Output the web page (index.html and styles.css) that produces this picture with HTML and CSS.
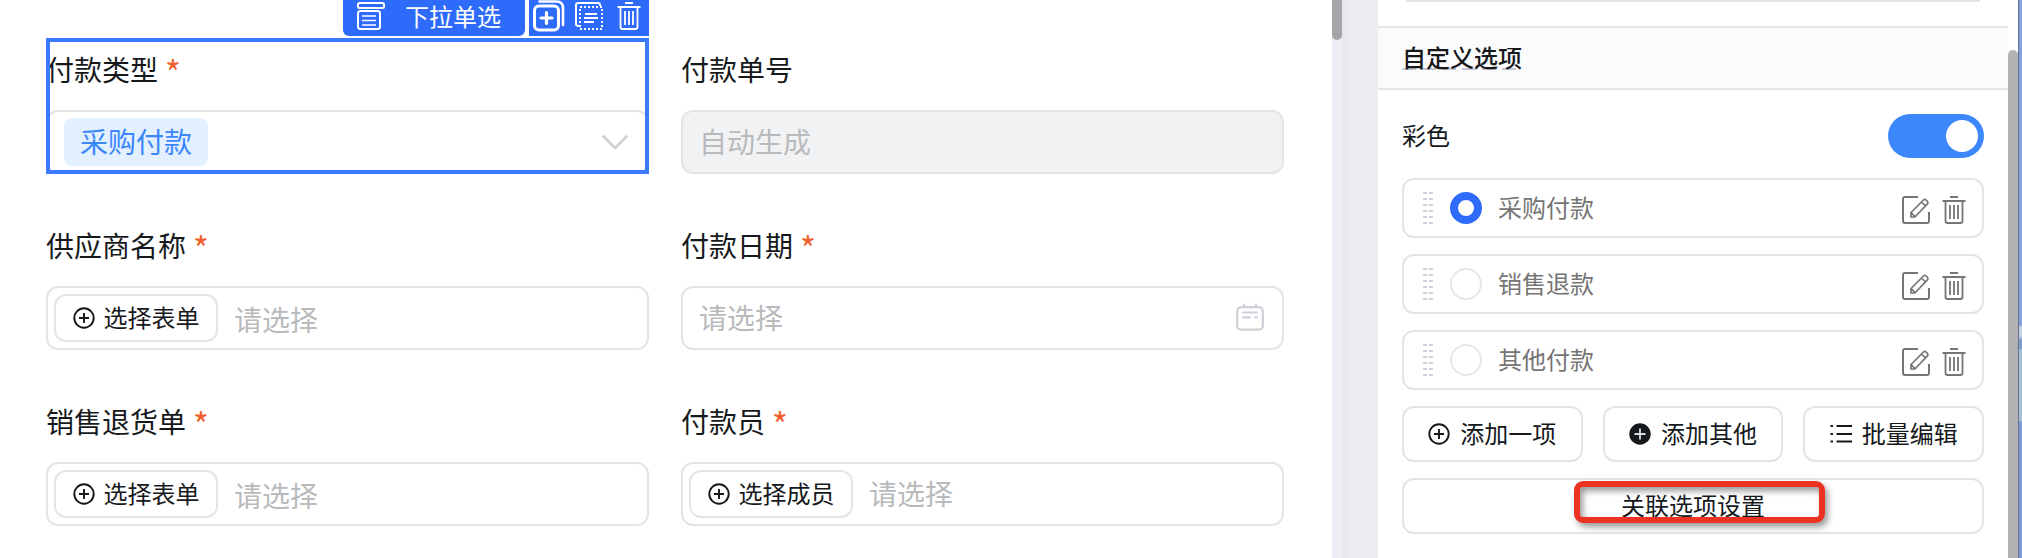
FILE: index.html
```
<!DOCTYPE html>
<html lang="zh-CN">
<head>
    <meta charset="UTF-8">
    <title>表单设计</title>
    <link rel="stylesheet" href="styles.css">
</head>
<body>
    <!-- shared icons -->
    <svg class="sprite">
        <symbol id="plus-circle" viewBox="0 0 22 22">
            <circle cx="11" cy="11" r="9.7" fill="none" stroke="currentColor" stroke-width="1.9"/>
            <path d="M11 6v10M6 11h10" stroke="currentColor" stroke-width="1.9"/>
        </symbol>
        <symbol id="trash" viewBox="0 0 24 28">
            <path d="M8 1h8M0.5 5h23M3.5 5v20q0 2 2 2h13q2 0 2-2V5M8 9v14M12 9v14M16 9v14" fill="none" stroke="currentColor" stroke-width="1.8"/>
        </symbol>
        <symbol id="edit" viewBox="0 0 28 28">
            <path d="M16 1H3Q1 1 1 3v22q0 2 2 2h22q2 0 2-2v-9" fill="none" stroke="currentColor" stroke-width="2"/>
            <path d="M9 21v-4.500L21.500 4q1.300-1.200 2.600 0l1.300 1.300q1.200 1.300 0 2.600L13 21zM9 16.500l4.300 4.300M19.500 6l4 4" fill="none" stroke="currentColor" stroke-width="1.700"/>
        </symbol>
    </svg>

    <div class="page">
        <main class="form">
            <div class="field selected">
                <div class="toolbar">
                    <div class="toolbar-name">
                        <svg width="28" height="28" viewBox="0 0 28 28" fill="none" stroke="currentColor" stroke-width="2">
                            <rect x="1" y="1" width="26" height="5" rx="1.5"/>
                            <rect x="1" y="9" width="22" height="18" rx="2.5"/>
                            <path d="M5 14h14M5 18.500h14M5 23h14" stroke-width="1.700"/>
                        </svg>
                        <span>下拉单选</span>
                    </div>
                    <div class="toolbar-actions">
                        <svg width="32" height="32" viewBox="0 0 32 32" fill="none" stroke="currentColor" stroke-linecap="round">
                            <rect x="1.500" y="6" width="24" height="24" rx="4.500" stroke-width="3"/>
                            <path d="M13.500 12.500v11M8 18h11" stroke-width="3.200"/>
                            <path d="M6.500 1.500h17q6.500 0 6.500 6.500v17" stroke-width="2.600"/>
                        </svg>
                        <svg class="icon-template" width="28" height="28" viewBox="0 0 28 28" fill="none" stroke="currentColor">
                            <path d="M25 4V3q0-2-2-2H3Q1 1 1 3v19q0 2 3 2" stroke-width="2"/>
                            <rect x="5" y="5" width="22" height="22" stroke-width="2" stroke-dasharray="2 2"/>
                            <path d="M10 12h12M9 16h14M9 20h10" stroke-width="1.800"/>
                        </svg>
                        <svg class="icon-delete" width="24" height="28"><use href="#trash"/></svg>
                    </div>
                </div>
                <label class="label">付款类型<i>*</i></label>
                <div class="input select">
                    <span class="tag">采购付款</span>
                    <svg width="26" height="15" viewBox="0 0 26 15" fill="none" stroke="#cfd0d4" stroke-width="2.8" stroke-linecap="round" stroke-linejoin="round">
                        <path d="M1.500 1.500L13 13L24.500 1.500"/>
                    </svg>
                </div>
            </div>
            <div class="field">
                <label class="label">付款单号</label>
                <div class="input disabled">自动生成</div>
            </div>
            <div class="field">
                <label class="label">供应商名称<i>*</i></label>
                <div class="input picker">
                    <button class="pick-btn"><svg width="22" height="22"><use href="#plus-circle"/></svg><span>选择表单</span></button>
                    <span class="hint low">请选择</span>
                </div>
            </div>
            <div class="field">
                <label class="label">付款日期<i>*</i></label>
                <div class="input date">
                    <span>请选择</span>
                    <svg width="28" height="28" viewBox="0 0 28 28" fill="none" stroke="#cfd0d7" stroke-width="2.200" stroke-linecap="round">
                        <rect x="1.200" y="4.200" width="25.600" height="22.500" rx="4"/>
                        <path d="M8 1.500v2M20 1.500v2M7 9.500h14M7 14.300h7M19 14.300h2"/>
                    </svg>
                </div>
            </div>
            <div class="field">
                <label class="label">销售退货单<i>*</i></label>
                <div class="input picker">
                    <button class="pick-btn"><svg width="22" height="22"><use href="#plus-circle"/></svg><span>选择表单</span></button>
                    <span class="hint low">请选择</span>
                </div>
            </div>
            <div class="field">
                <label class="label">付款员<i>*</i></label>
                <div class="input picker">
                    <button class="pick-btn"><svg width="22" height="22"><use href="#plus-circle"/></svg><span>选择成员</span></button>
                    <span class="hint">请选择</span>
                </div>
            </div>
        </main>
        <div class="form-scroll"><div class="form-thumb"></div></div>
        <div class="gutter"></div>

        <aside class="settings">
            <div class="prev-card"></div>
            <div class="section-title"><span>自定义选项</span></div>
            <div class="settings-body">
                <div class="color-row">
                    <span>彩色</span>
                    <div class="switch"><div class="knob"></div></div>
                </div>
                <div class="option">
                    <div class="drag"></div>
                    <div class="radio checked"></div>
                    <span class="option-name">采购付款</span>
                    <svg width="28" height="28"><use href="#edit"/></svg>
                    <svg width="24" height="28"><use href="#trash"/></svg>
                </div>
                <div class="option">
                    <div class="drag"></div>
                    <div class="radio"></div>
                    <span class="option-name">销售退款</span>
                    <svg width="28" height="28"><use href="#edit"/></svg>
                    <svg width="24" height="28"><use href="#trash"/></svg>
                </div>
                <div class="option">
                    <div class="drag"></div>
                    <div class="radio"></div>
                    <span class="option-name">其他付款</span>
                    <svg width="28" height="28"><use href="#edit"/></svg>
                    <svg width="24" height="28"><use href="#trash"/></svg>
                </div>
                <div class="btn-row">
                    <button class="btn"><svg width="22" height="22"><use href="#plus-circle"/></svg><span>添加一项</span></button>
                    <button class="btn">
                        <svg width="22" height="22" viewBox="0 0 22 22">
                            <circle cx="11" cy="11" r="10.700" fill="#16191c"/>
                            <path d="M11 5.500v11M5.500 11h11" stroke="#ddd" stroke-width="1.800"/>
                        </svg>
                        <span>添加其他</span>
                    </button>
                    <button class="btn">
                        <svg width="22" height="22" viewBox="0 0 22 22" stroke="currentColor" stroke-width="2">
                            <path d="M6.500 3H22M6.500 11H22M6.500 18.500H22M0.500 3h2.500M0.500 11h2.500M0.500 18.500h2.500"/>
                        </svg>
                        <span>批量编辑</span>
                    </button>
                </div>
                <button class="btn link-btn"><span>关联选项设置</span><b class="marker"></b></button>
            </div>
        </aside>
        <div class="side-scroll"><div class="side-thumb"></div></div>
        <div class="edge"></div>
    </div>
</body>
</html>
```

FILE: styles.css
```
* {
    box-sizing: border-box;
}

body {
    margin: 0;
    overflow: hidden;
    background: #fff;
    color: #16191c;
    font-family: "Noto Sans CJK SC", sans-serif;
}

svg {
    display: block;
    flex-shrink: 0;
}

button {
    font-family: inherit;
    color: #16191c;
    background: #fff;
    padding: 0;
}

.sprite {
    position: absolute;
    width: 0;
    height: 0;
}

.page {
    display: flex;
    height: 558px;
    overflow: hidden;
}

/* form canvas */
.form {
    width: 1332px;
    padding: 38px 48px 0 46px;
    display: grid;
    grid-template-columns: 603px 603px;
    grid-auto-rows: 136px;
    gap: 40px 32px;
}

.field {
    position: relative;
    display: flex;
    flex-direction: column;
    justify-content: space-between;
}

.selected::after {
    content: "";
    position: absolute;
    inset: 0;
    border: 4px solid #3a7afb;
}

.label {
    display: flex;
    padding-top: 11px;
    font-size: 28px;
    line-height: 40px;
}

.label i {
    padding-top: 3px;
    margin-left: 7px;
    font-size: 34px;
    font-style: normal;
    line-height: 40px;
    height: 40px;
    color: #f25f2f;
}

.input {
    height: 64px;
    border: 2px solid #e4e4e5;
    border-radius: 12px;
    display: flex;
    align-items: center;
    font-size: 28px;
    line-height: 40px;
    color: #b9babb;
}

.select {
    justify-content: space-between;
    padding: 0 19px 0 16px;
}

.tag {
    width: 144px;
    height: 48px;
    border-radius: 8px;
    background: #e2f0ff;
    color: #3b87fb;
    text-align: center;
    line-height: 47px;
}

.disabled {
    padding: 0 0 2px 16px;
    background: #f1f2f4;
    border-color: #e2e4e7;
}

.date {
    justify-content: space-between;
    padding: 0 18px 0 16px;
}

.date span {
    padding-bottom: 2px;
}

.date svg {
    margin-top: -2px;
}

.picker {
    padding-left: 6px;
}

.pick-btn {
    width: 164px;
    height: 48px;
    border: 2px solid #e4e4e5;
    border-radius: 12px;
    display: flex;
    align-items: center;
    justify-content: center;
    gap: 9px;
    font-size: 24px;
    line-height: 36px;
}

.pick-btn span,
.btn span {
    padding-bottom: 2px;
}

.hint {
    margin-left: 16px;
    padding-bottom: 2px;
}

.low {
    padding: 2px 0 0;
}

/* toolbar over the selected field */
.toolbar {
    position: absolute;
    right: 0;
    bottom: 138px;
    height: 36px;
    display: flex;
    gap: 4px;
    color: #fff;
}

.toolbar-name,
.toolbar-actions {
    display: flex;
    align-items: flex-start;
    background: #2e6bfa;
}

.toolbar-name {
    width: 182px;
    padding: 2px 0 0 14px;
    gap: 20px;
    border-radius: 0 0 6px 6px;
    font-size: 24px;
    line-height: 27px;
}

.toolbar-actions {
    width: 120px;
    padding-left: 4px;
}

.icon-template {
    margin: 2px 0 0 10px;
}

.icon-delete {
    margin: 2px 0 0 14px;
}

/* area between the panels */
.form-scroll {
    width: 10px;
    background: #edeef4;
}

.form-thumb {
    height: 40px;
    background: #a3a5a8;
    border-radius: 0 0 5px 5px;
}

.gutter {
    width: 36px;
    background: linear-gradient(to right, #e3e6eb, #e9ebf0 5px, #ecedf3 16px);
}

/* settings panel */
.settings {
    width: 630px;
}

.prev-card {
    height: 2px;
    margin: 0 28px 24px;
    background: #e4e4e5;
}

.section-title {
    height: 64px;
    padding: 11px 24px;
    background: #fbfbfb;
    border-top: 2px solid #e4e5e8;
    border-bottom: 2px solid #e4e5e8;
    font-size: 24px;
    font-weight: 500;
    line-height: 36px;
}

.section-title span {
    display: inline-block;
    height: 31px;
    background: repeating-linear-gradient(to right, #c3c8d6 0 14px, transparent 14px 20px) bottom / 100% 2px no-repeat;
}

.settings-body {
    padding: 24px 24px 0;
    display: flex;
    flex-direction: column;
    gap: 16px;
}

.color-row {
    display: flex;
    justify-content: space-between;
    align-items: center;
    height: 44px;
    margin-bottom: 4px;
    font-size: 24px;
    line-height: 36px;
}

.color-row span {
    padding-bottom: 2px;
}

.switch {
    width: 96px;
    height: 44px;
    padding: 6px;
    border-radius: 22px;
    background: #3b87fb;
    display: flex;
    justify-content: flex-end;
}

.knob {
    width: 32px;
    height: 32px;
    border-radius: 50%;
    background: #fff;
}

.option {
    height: 60px;
    padding: 0 16px 0 19px;
    border: 2px solid #e4e4e5;
    border-radius: 12px;
    display: flex;
    align-items: center;
    color: #757575;
}

.option svg {
    margin: 4px 0 0 12px;
}

.drag {
    width: 10px;
    height: 32px;
    background: repeating-linear-gradient(to bottom, transparent 0 2px, #fff 2px 6px), linear-gradient(to right, #cfd2dc 4px, #fff 4px 6px, #cfd2dc 6px);
}

.radio {
    width: 32px;
    height: 32px;
    margin: 0 16px 0 17px;
    border: 2px solid #e5e6ee;
    border-radius: 50%;
}

.checked {
    border: 8px solid #2e6bfa;
}

.option-name {
    flex: 1;
    padding-bottom: 2px;
    font-size: 24px;
    line-height: 36px;
}

.btn-row {
    display: grid;
    grid-template-columns: repeat(3, 1fr);
    gap: 20px;
}

.btn {
    height: 56px;
    border: 2px solid #e4e4e5;
    border-radius: 12px;
    display: flex;
    align-items: center;
    justify-content: center;
    gap: 10px;
    font-size: 24px;
    line-height: 36px;
}

.link-btn {
    position: relative;
}

.marker {
    position: absolute;
    left: 170px;
    top: 1px;
    width: 251px;
    height: 42px;
    border: 6px solid #ec3323;
    border-radius: 9px;
    box-shadow: 3px 4px 6px rgba(0, 0, 0, 0.4), inset 3px 4px 6px rgba(0, 0, 0, 0.4);
}

.side-scroll {
    width: 10px;
    padding-top: 50px;
}

.side-thumb {
    height: 520px;
    background: #b2b2b2;
    border-radius: 5px;
}

.edge {
    width: 4px;
    border-left: 1px solid #5f7396;
    background: linear-gradient(#8aa1d6 0 325px, #c7d3df 327px 336px, #7f9cc9 340px 348px, #a9bfd2 350px 420px, #7d9bd2 422px);
}
```
